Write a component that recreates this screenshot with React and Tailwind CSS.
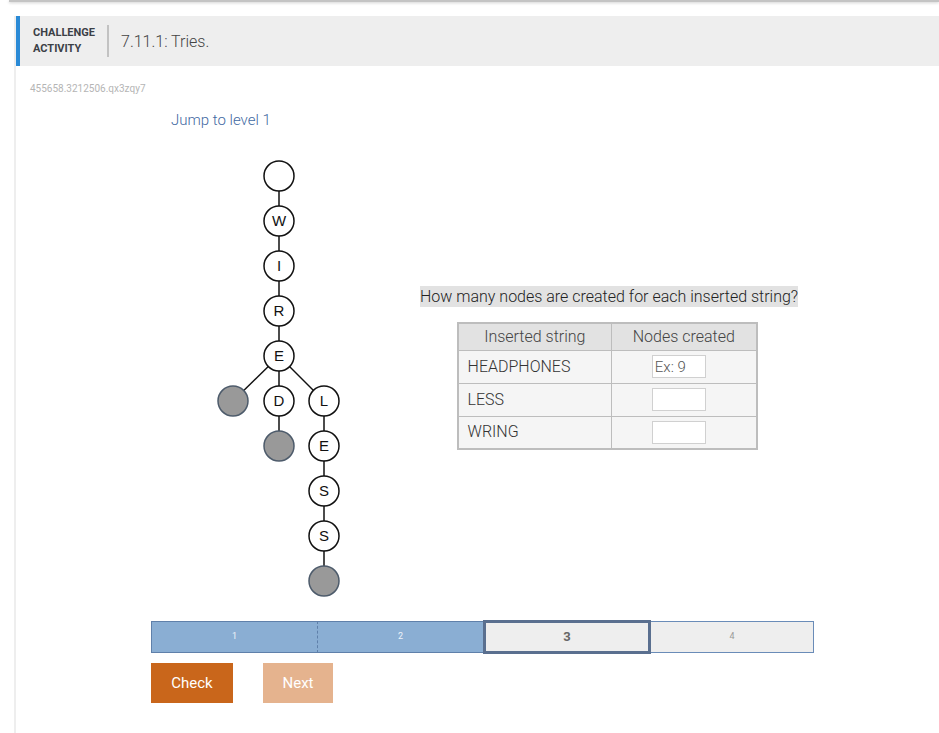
import React from 'react';

const nodes = [
  { x: 74, y: 21, label: '' },
  { x: 74, y: 66, label: 'W' },
  { x: 74, y: 111, label: 'I' },
  { x: 74, y: 156, label: 'R' },
  { x: 74, y: 201, label: 'E' },
  { x: 28, y: 246, end: true },
  { x: 74, y: 246, label: 'D' },
  { x: 119, y: 246, label: 'L' },
  { x: 74, y: 291, end: true },
  { x: 119, y: 291, label: 'E' },
  { x: 119, y: 336, label: 'S' },
  { x: 119, y: 381, label: 'S' },
  { x: 119, y: 426, end: true },
];

// parent index -> child index
const edges = [
  [0, 1], [1, 2], [2, 3], [3, 4],
  [4, 5], [4, 6], [4, 7],
  [6, 8], [7, 9], [9, 10], [10, 11], [11, 12],
];

const rows = [
  { word: 'HEADPHONES', placeholder: 'Ex: 9' },
  { word: 'LESS', placeholder: '' },
  { word: 'WRING', placeholder: '' },
];

const TrieDiagram = () => (
  <svg width="150" height="445" viewBox="0 0 150 445" className="shrink-0">
    {edges.map(([a, b]) => (
      <line
        key={`${a}-${b}`}
        x1={nodes[a].x}
        y1={nodes[a].y}
        x2={nodes[b].x}
        y2={nodes[b].y}
        stroke="#111"
        strokeWidth="1.5"
      />
    ))}
    {nodes.map((n, i) => (
      <g key={i}>
        <circle
          cx={n.x}
          cy={n.y}
          r="15"
          fill={n.end ? '#999999' : '#ffffff'}
          stroke={n.end ? '#4d5b6b' : '#111'}
          strokeWidth="1.5"
        />
        {n.label && (
          <text
            x={n.x}
            y={n.y + 5}
            textAnchor="middle"
            fontSize="15"
            fontFamily="'Liberation Sans', Arial, sans-serif"
            fill="#111"
          >
            {n.label}
          </text>
        )}
      </g>
    ))}
  </svg>
);

const App = () => {
  return (
    <div className="min-h-screen bg-white font-['Roboto',sans-serif]">
      {/* bottom edge of the previous card */}
      <div className="ml-[9px] h-[2px] bg-[#c4c4c4] shadow-[0_1px_3px_rgba(0,0,0,0.2)]" />

      <div className="ml-[14px] mt-[14px] min-h-[717px] border-l-2 border-[#eeeeee]">
        {/* Header */}
        <div className="flex h-[50px] items-center border-l-4 border-[#2a8ad6] bg-[#eeeeee]">
          <div className="ml-[13px] text-[11px] font-bold leading-[16px] text-[#3b4046]">
            <div>CHALLENGE</div>
            <div>ACTIVITY</div>
          </div>
          <div className="ml-[12px] h-[32px] w-[2px] bg-[#c2c2c2]" />
          <div className="ml-[12px] mt-[2px] text-[16px] font-light text-[#444]">7.11.1: Tries.</div>
        </div>

        {/* Body */}
        <div className="pl-[14px] pt-[17px]">
          <div className="text-[10px] leading-[12px] text-[#b5b5b5]">455658.3212506.qx3zqy7</div>

          <div className="ml-[121px]">
            <div className="ml-[20px] mt-[15px] text-[15px] font-light leading-[20px] text-[#3f69a2]">Jump to level 1</div>

            <div className="mt-[25px] flex">
              <div className="ml-[54px]">
                <TrieDiagram />
              </div>

              <div className="ml-[65px] mt-[131px] flex flex-col items-center">
                <div className="bg-[#e2e2e2] text-[16px] font-light leading-[21px] text-[#222]">
                  How many nodes are created for each inserted string?
                </div>
                <table className="ml-[-4px] mt-[15px] border-collapse border-2 border-[#bdbdbd] text-[16px] font-light text-[#333]">
                  <thead>
                    <tr className="h-[27px] bg-[#e2e2e2]">
                      <th className="w-[154px] border border-[#bdbdbd] font-light text-[#444]">Inserted string</th>
                      <th className="w-[145px] border border-[#bdbdbd] font-light text-[#444]">Nodes created</th>
                    </tr>
                  </thead>
                  <tbody>
                    {rows.map(r => (
                      <tr key={r.word} className="h-[33px] bg-[#f5f5f5]">
                        <td className="border border-[#bdbdbd] px-[9px]">{r.word}</td>
                        <td className="border border-[#bdbdbd] text-center">
                          <input
                            type="text"
                            placeholder={r.placeholder}
                            className="ml-[-10px] h-[23px] w-[54px] border border-[#d0d0d0] bg-white px-[2px] text-[15px] font-light text-[#333] placeholder:text-[#555] outline-none"
                          />
                        </td>
                      </tr>
                    ))}
                  </tbody>
                </table>
              </div>
            </div>

            {/* Level progress */}
            <div className="mt-[21px] flex h-[32px] w-[663px] items-stretch">
              <div className="flex w-[166px] items-center justify-center border border-r-0 border-[#5f80aa] bg-[#8aaed3] text-[9px] text-[#eef3f9]">1</div>
              <div className="flex w-[166px] items-center justify-center border border-r-0 border-[#5f80aa] bg-[#8aaed3] text-[9px] text-[#eef3f9] [border-left-style:dashed]">2</div>
              <div className="my-[-1px] flex w-[168px] items-center justify-center border-[3px] border-[#5a6f8f] bg-[#eeeeee] text-[13px] font-bold text-[#666]">3</div>
              <div className="flex w-[163px] items-center justify-center border border-l-0 border-[#6a8cb8] bg-[#eeeeee] text-[9px] text-[#999]">4</div>
            </div>

            <div className="mt-[10px] flex gap-[30px]">
              <button className="h-[40px] w-[82px] bg-[#c9661b] text-[15px] text-white">Check</button>
              <button className="h-[40px] w-[70px] bg-[#e5b38e] text-[15px] text-white">Next</button>
            </div>
          </div>
        </div>
      </div>
    </div>
  );
};

export default App;
